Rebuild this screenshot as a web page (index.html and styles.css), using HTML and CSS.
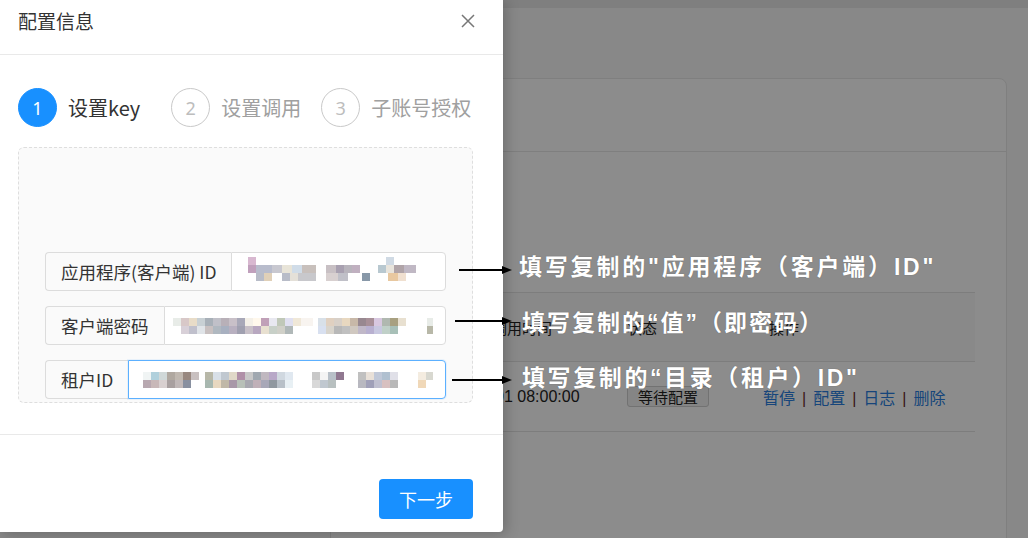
FILE: index.html
```html
<!DOCTYPE html>
<html lang="zh-CN">
<head>
<meta charset="utf-8">
<title>配置信息</title>
<link rel="stylesheet" href="styles.css">
</head>
<body>
<div class="page">
  <div class="topbar"></div>
  <div class="content">
    <div class="card">
      <div class="card-head"></div>
      <div class="card-body">
        <div class="table">
          <div class="tr th">
            <div class="c1 th-c1">调用时间</div>
            <div class="c2">状态</div>
            <div class="c3 th-c3">操作</div>
          </div>
          <div class="tr">
            <div class="c1">1970-01-01 08:00:00</div>
            <div class="c2"><span class="tag">等待配置</span></div>
            <div class="c3"><a class="lnk">暂停</a><span class="sep">|</span><a class="lnk">配置</a><span class="sep">|</span><a class="lnk">日志</a><span class="sep">|</span><a class="lnk">删除</a></div>
          </div>
        </div>
      </div>
    </div>
  </div>
</div>

<div class="mask"></div>

<div class="modal">
  <div class="modal-head">
    <div class="modal-title">配置信息</div>
    <svg class="close" width="14" height="14" viewBox="0 0 14 14"><path d="M1 1 L13 13 M13 1 L1 13" stroke="#777" stroke-width="1.5" fill="none"/></svg>
  </div>
  <div class="modal-body">
    <div class="steps">
      <div class="step step-1 active"><span class="dot">1</span><span class="label">设置key</span></div>
      <div class="step step-2"><span class="dot">2</span><span class="label">设置调用</span></div>
      <div class="step step-3"><span class="dot">3</span><span class="label">子账号授权</span></div>
    </div>
    <div class="box">
      <div class="group">
        <div class="addon">应用程序(客户端) ID</div>
        <div class="input in1"><span class="mosaic m1"></span></div>
      </div>
      <div class="group">
        <div class="addon">客户端密码</div>
        <div class="input in2"><span class="mosaic m2"></span></div>
      </div>
      <div class="group">
        <div class="addon">租户ID</div>
        <div class="input in3 focus"><span class="mosaic m3"></span></div>
      </div>
    </div>
  </div>
  <div class="modal-foot">
    <button class="btn-primary">下一步</button>
  </div>
</div>

<div class="note note-1">填写复制的"应用程序（客户端）ID"</div>
<div class="note note-2">填写复制的“值”（即密码）</div>
<div class="note note-3">填写复制的“目录（租户）ID"</div>

<svg class="arrow arrow-1" width="53" height="10" viewBox="0 0 53 10"><line x1="0" y1="5" x2="44" y2="5" stroke="#000" stroke-width="2"/><polygon points="43,1 53,5 43,9" fill="#000"/></svg>
<svg class="arrow arrow-2" width="57" height="10" viewBox="0 0 57 10"><line x1="0" y1="5" x2="48" y2="5" stroke="#000" stroke-width="2"/><polygon points="47,1 57,5 47,9" fill="#000"/></svg>
<svg class="arrow arrow-3" width="60" height="10" viewBox="0 0 60 10"><line x1="0" y1="5" x2="51" y2="5" stroke="#000" stroke-width="2"/><polygon points="50,1 60,5 50,9" fill="#000"/></svg>
</body>
</html>
```
FILE: styles.css
```css
* { box-sizing: border-box; }
html, body { margin: 0; padding: 0; }
body {
  width: 1028px;
  height: 538px;
  overflow: hidden;
  position: relative;
  background: #f7f7f7;
  font-family: "Noto Sans CJK SC", "Noto Sans", sans-serif;
  color: #333;
}

/* underlying page */
.page { height: 538px; }
.topbar { height: 8px; background: #e8e8e8; }
.content { padding: 70px 21px 0 330px; }
.card {
  background: #fff;
  border: 1px solid #e8e8e8;
  border-radius: 8px;
  height: 470px;
}
.card-head { height: 73px; border-bottom: 1px solid #e8e8e8; }
.card-body { padding: 140px 31px 0 89px; }
.table { border-top: 1px solid #e4e4e4; font-family: "Liberation Sans", "Noto Sans CJK SC", sans-serif; font-size: 16px; color: #222; }
.tr { display: flex; align-items: center; height: 70px; border-bottom: 1px solid #e4e4e4; }
.tr.th { height: 69px; background: #fafafa; font-size: 15px; }
.c1 { width: 207px; padding-left: 11px; }
.c2 { width: 136px; }
.c3 { flex: 1; }
.th-c1 { padding-left: 72px; }
.th-c3 { padding-left: 6px; }
.tag {
  display: inline-block;
  height: 21px;
  line-height: 19px;
  padding: 0 10px;
  border: 1px solid #cfcfcf;
  border-radius: 3px;
  background: #f2f2f2;
  font-size: 15px;
  font-family: "Noto Sans CJK SC", sans-serif;
}
.lnk { color: #2a7fe0; font-family: "Noto Sans CJK SC", sans-serif; font-size: 16px; }
.sep { color: #6a2a2a; margin: 0 7px; }

.mask {
  position: absolute;
  inset: 0;
  background: rgba(0, 0, 0, 0.45);
}

/* modal */
.modal {
  position: absolute;
  left: 0;
  top: 0;
  width: 503px;
  height: 532px;
  background: #fff;
  border-radius: 0 0 4px 0;
  box-shadow: 3px 2px 14px rgba(0, 0, 0, 0.22);
  display: flex;
  flex-direction: column;
}
.modal-head {
  height: 55px;
  border-bottom: 1px solid #e9e9e9;
  padding: 0 28px 12px 18px;
  display: flex;
  align-items: center;
  justify-content: space-between;
}
.modal-title { font-size: 19px; color: #333; line-height: 24px; }
.close { display: block; }
.modal-body { padding: 33px 30px 31px 18px; border-bottom: 1px solid #e9e9e9; }
.steps { display: flex; align-items: center; height: 39px; }
.step { display: flex; align-items: center; gap: 11px; }
.step-1 { margin-right: 31px; }
.step-2 { margin-right: 20px; }
.dot {
  width: 39px;
  height: 39px;
  border-radius: 50%;
  border: 1px solid #c9c9c9;
  color: #bdbdbd;
  font-size: 18px;
  display: flex;
  align-items: center;
  justify-content: center;
  font-family: "Noto Sans", sans-serif;
}
.label { font-size: 20px; color: #a0a0a0; line-height: 26px; }
.step.active .dot { background: #1890ff; border-color: #1890ff; color: #fff; }
.step.active .label { color: #333; }

.box {
  margin-top: 20px;
  height: 256px;
  border: 1px dashed #dedede;
  border-radius: 6px;
  background: #fafafa;
  padding: 104px 26px 0 26px;
  display: flex;
  flex-direction: column;
  gap: 15px;
}
.group { display: flex; height: 39px; }
.addon {
  padding: 0 15px;
  border: 1px solid #dcdcdc;
  border-right: none;
  border-radius: 4px 0 0 4px;
  background: #fafafa;
  font-size: 17.5px;
  color: #333;
  display: flex;
  align-items: center;
  white-space: nowrap;
}
.input {
  flex: 1;
  border: 1px solid #dcdcdc;
  border-radius: 0 4px 4px 0;
  background: #fff;
  display: flex;
  align-items: center;
}
.input.focus { border-color: #5cb0ff; box-shadow: 0 0 0 1px rgba(24, 144, 255, 0.08); }
.in1 { padding-left: 16px; }
.in2 { padding-left: 8px; }
.in3 { padding-left: 14px; }

.mosaic { display: block; background-repeat: no-repeat; filter: blur(0.3px); }
.m1 {
  width: 168px;
  height: 24px;
  margin-bottom: 5px;
  background-size: 100% 8px;
  background-position: 0 0, 0 8px, 0 16px;
  background-image:
    linear-gradient(90deg, #d8b8d0 0 8px, transparent 8px 138px, #d0dae4 138px 146px, transparent 146px),
    linear-gradient(90deg, #c0a0bc 0 8px, #b8bccc 8px 24px, #c8c8d0 24px 34px, #e8e4d8 34px 44px, #d0dce8 44px 54px, #c8c0bc 54px 68px, transparent 68px 78px, #c8c0c4 78px 88px, #a8a0b0 88px 96px, #b8b4bc 96px 104px, #c0b0c0 104px 112px, transparent 112px 130px, #b8c8d0 130px 138px, #e8e4dc 138px 146px, #b0a4a8 146px 156px, #c0b8c4 156px 168px),
    linear-gradient(90deg, transparent 0 8px, #b8bcc8 8px 16px, #e0d0b8 16px 24px, transparent 24px 34px, #b8bcc8 34px 42px, #e4e0d8 42px 50px, #c8c8cc 50px 68px, transparent 68px 78px, #d8d0d0 78px 90px, #c0c0c8 90px 100px, transparent 100px 114px, #8898a8 114px 122px, transparent 122px 140px, #e8c8a0 140px 150px, #f0e0d0 150px 158px, transparent 158px);
}
.m2 {
  width: 260px;
  height: 16px;
  background-size: 100% 8px;
  background-position: 0 0, 0 8px;
  background-image:
    linear-gradient(90deg, #e8ece8 0 8px, #d8c8c8 8px 16px, #e8dcc8 16px 24px, #c8d0d4 24px 32px, #a8b0b8 32px 40px, #c0c0c8 40px 48px, #b8b0b8 48px 56px, #c8c0c8 56px 64px, #a8a8b8 64px 72px, #f4f0e8 72px 80px, #fff8ec 80px 88px, #c0a0b8 88px 96px, #e8e8f0 96px 104px, #c0c8b8 104px 112px, #e0e0f0 112px 120px, #f0e8d8 120px 128px, #f8f4f0 128px 140px, transparent 140px 145px, #d8e0e8 145px 153px, #e0d0c0 153px 161px, #d8d0c8 161px 169px, #e8d8c0 169px 177px, #c8b8a8 177px 185px, #988890 185px 193px, #a89098 193px 201px, #d8c8e0 201px 209px, #b0b8b0 209px 217px, #a8a080 217px 225px, #e8e0d0 225px 233px, transparent 233px 254px, #e8ece8 254px 260px),
    linear-gradient(90deg, transparent 0 8px, #d8d0d8 8px 16px, #c0c0cc 16px 24px, #e0e4e8 24px 32px, #c8c0c0 32px 40px, #b0b8c0 40px 48px, #a8b0c0 48px 56px, #b8b0c0 56px 64px, #a0a0b0 64px 72px, #c8c0c8 72px 80px, #b8a8c0 80px 88px, #e8e0d0 88px 96px, #c8d0c8 96px 104px, #d0d0c8 104px 112px, #b0b8b8 112px 120px, transparent 120px 145px, #d8e0f0 145px 153px, #d8d4cc 153px 161px, #b8b8b8 161px 169px, #c0c0c0 169px 177px, #d0c8c0 177px 185px, #c0b8c8 185px 193px, #b8b0d0 193px 201px, #c8c8e0 201px 209px, #c0d0c8 209px 217px, #a8c0b8 217px 225px, transparent 225px 254px, #b8b8a8 254px 260px);
}
.m3 {
  width: 290px;
  height: 16px;
  background-size: 100% 8px;
  background-position: 0 0, 0 8px;
  background-image:
    linear-gradient(90deg, #f0f4f4 0 8px, #b0d0dc 8px 16px, #d0d8d8 16px 24px, #b0a8a0 24px 32px, #c0b8b0 32px 40px, #988880 40px 48px, #c8c0c0 48px 56px, transparent 56px 62px, #b8b8a8 62px 70px, #d8e0e8 70px 78px, #c0c8d0 78px 86px, #e0d8c8 86px 94px, #b090a8 94px 102px, #c8c8c8 102px 110px, #a0a8b0 110px 118px, #c0b8c0 118px 126px, #b8a8c8 126px 134px, #d0d8e0 134px 142px, #e0e8f0 142px 150px, transparent 150px 169px, #c8c8c8 169px 177px, #f4f4f4 177px 185px, #b8c0c8 185px 193px, #907890 193px 201px, transparent 201px 215px, #c0c0c0 215px 223px, #e8e0d8 223px 231px, #c0c8d8 231px 239px, #b0c0d0 239px 247px, #e0e0e8 247px 255px, transparent 255px 275px, #f4ece0 275px 283px, #d8d8d0 283px 290px),
    linear-gradient(90deg, #b8a8b0 0 8px, #c8b8b8 8px 16px, #d8d0d0 16px 24px, #a8a0a0 24px 32px, #c0b8b8 32px 40px, #8890a0 40px 48px, transparent 48px 62px, #a8b8b0 62px 70px, #e8d8c0 70px 78px, #c0b8a8 78px 86px, #a898a8 86px 94px, #b8c0b8 94px 102px, #a8a8b0 102px 110px, #c0b0b8 110px 118px, #a8a8b8 118px 126px, #9098a0 126px 134px, #b8c0c8 134px 142px, #e8f0f4 142px 150px, transparent 150px 169px, #d8d8d8 169px 177px, #c0c8d0 177px 185px, #b8c0c0 185px 193px, transparent 193px 215px, #b8b8c0 215px 223px, #a0a0b8 223px 231px, #c0c0d0 231px 239px, #d8c0c0 239px 247px, #b8b8b8 247px 255px, transparent 255px 275px, #f0d8b8 275px 283px, transparent 283px 290px);
}

.modal-foot {
  flex: 1;
  display: flex;
  justify-content: flex-end;
  align-items: flex-start;
  padding: 44px 30px 0 0;
}
.btn-primary {
  width: 94px;
  height: 40px;
  border: none;
  border-radius: 4px;
  background: #1890ff;
  color: #fff;
  font-size: 18px;
  font-family: "Noto Sans CJK SC", sans-serif;
  padding: 0;
}

/* annotations drawn over the screenshot */
.note {
  position: absolute;
  color: #fff;
  font-family: "Liberation Sans", "Noto Sans CJK SC", sans-serif;
  font-weight: bold;
  font-size: 23px;
  letter-spacing: 2px;
  line-height: 26px;
  white-space: nowrap;
  text-spacing-trim: space-all;
  text-shadow: 0 0 1px rgba(0, 0, 0, 0.35);
}
.note-1 { left: 519px; top: 254px; letter-spacing: 2.8px; }
.note-2 { left: 522px; top: 310px; }
.note-3 { left: 522px; top: 365px; letter-spacing: 2.6px; }
.arrow { position: absolute; display: block; }
.arrow-1 { left: 459px; top: 265px; }
.arrow-2 { left: 455px; top: 316px; }
.arrow-3 { left: 452px; top: 375px; }
```
